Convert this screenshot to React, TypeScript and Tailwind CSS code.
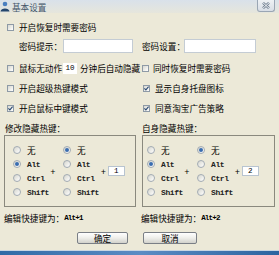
import React from 'react'

const keys = ['无', 'Alt', 'Ctrl', 'Shift']

function Check({ on }: { on?: boolean }) {
  return (
    <span className="w-[7px] h-[7px] shrink-0 border border-[#8e9aa6] bg-linear-to-br from-[#d8d8d0] to-white flex items-center justify-center">
      {on && (
        <svg width="5" height="5" viewBox="0 0 5 5">
          <path d="M0.4 2.4 L1.9 3.9 L4.6 0.7" stroke="#2b4a72" strokeWidth="1.1" fill="none" />
        </svg>
      )}
    </span>
  )
}

function Radio({ on }: { on?: boolean }) {
  return (
    <span className="w-[8px] h-[8px] shrink-0 rounded-full border border-[#a3abb3] bg-linear-to-br from-[#d6d6ce] to-white flex items-center justify-center">
      {on && <span className="w-[4px] h-[4px] rounded-full bg-[#3a6db0]" />}
    </span>
  )
}

function KeyLabel({ k }: { k: string }) {
  if (k === '无') return <span>无</span>
  return <span className="mt-[1px] font-['Liberation_Mono',monospace] text-[8px] tracking-[-0.4px] font-bold text-[#222]">{k}</span>
}

function RadioCol({ checked }: { checked: number }) {
  return (
    <div className="flex flex-col w-[36px] shrink-0">
      {keys.map((k, i) => (
        <div key={k} className="h-[14px] flex items-center gap-[6px]">
          <Radio on={i === checked} />
          <KeyLabel k={k} />
        </div>
      ))}
    </div>
  )
}

function HotkeyBox({ n, pad, w }: { n: string; pad: string; w: string }) {
  return (
    <div className={`${w} h-[72px] border border-[#8a897e] flex items-center ${pad}`}>
      <RadioCol checked={1} />
      <span className="w-[8px] text-center shrink-0">+</span>
      <div className="ml-[6px]">
        <RadioCol checked={0} />
      </div>
      <span className="w-[9px] text-center shrink-0">+</span>
      <div className="w-[17px] h-[10px] shrink-0 bg-white border border-[#b8c4d0] flex items-center pl-[5px] pt-[1px] font-['Liberation_Mono',monospace] text-[7.5px]">
        {n}
      </div>
    </div>
  )
}

export default function App() {
  return (
    <div className="w-[279px] h-[255px] bg-[#ece9d8] flex flex-col overflow-hidden text-[8.6px] leading-none text-black whitespace-nowrap font-['Noto_Sans_CJK_SC',sans-serif]">
      {/* Title bar */}
      <div className="h-[13px] shrink-0 flex items-start bg-linear-to-b from-[#d9e1ea] to-[#e6e6dc]">
        <svg width="10" height="11" viewBox="0 0 10 11" className="mt-[1px]">
          <circle cx="5" cy="3" r="2.3" fill="#4a7fbf" />
          <path d="M0.5 10.5 C0.8 6.5 9.2 6.5 9.5 10.5 Z" fill="#24466e" />
        </svg>
        <span className="ml-[2px] mt-[3px] text-[#44566a]">基本设置</span>
        <div className="ml-auto mr-[4px] w-[18px] h-[12px] rounded-b-[3px] border border-t-0 border-[#9aa6b4] bg-linear-to-b from-[#eef1f4] to-[#d8dee6] flex items-center justify-center">
          <svg width="8" height="7" viewBox="0 0 8 7">
            <path d="M1 0.8 L7 6.2 M7 0.8 L1 6.2" stroke="#6d7c8e" strokeWidth="2.4" />
            <path d="M1 0.8 L7 6.2 M7 0.8 L1 6.2" stroke="#f4f6f8" strokeWidth="1" />
          </svg>
        </div>
      </div>

      <div className="pl-[4px] grid grid-cols-[137px_133px]">
        {/* Row 1 */}
        <div className="mt-[8px] h-[12px] flex items-center gap-[5px] pl-[3px]">
          <Check />
          <span>开启恢复时需要密码</span>
        </div>
        <div />

        {/* Row 2 */}
        <div className="mt-[6px] h-[14px] flex items-center pl-[15px]">
          <span className="w-[44px] shrink-0">密码提示：</span>
          <div className="w-[70px] h-[14px] shrink-0 bg-white border border-[#c4ccd4]" />
        </div>
        <div className="mt-[6px] h-[14px] flex items-center pl-[1px]">
          <span className="w-[42px] shrink-0">密码设置：</span>
          <div className="w-[72px] h-[14px] shrink-0 bg-white border border-[#c4ccd4]" />
        </div>

        {/* Row 3 */}
        <div className="mt-[9px] h-[12px] flex items-center pl-[3px]">
          <Check />
          <span className="ml-[5px]">鼠标无动作</span>
          <div className="ml-[1px] w-[14px] h-[11px] pt-[2px] shrink-0 bg-white flex items-center justify-center font-['Liberation_Mono',monospace] text-[7.5px]">
            10
          </div>
          <span className="ml-[3px]">分钟后自动隐藏</span>
        </div>
        <div className="mt-[9px] h-[12px] flex items-center gap-[4px] pl-[1px]">
          <Check />
          <span>同时恢复时需要密码</span>
        </div>

        {/* Row 4 */}
        <div className="mt-[8px] h-[12px] flex items-center gap-[5px] pl-[3px]">
          <Check />
          <span>开启超级热键模式</span>
        </div>
        <div className="mt-[8px] h-[12px] flex items-center gap-[5px] pl-[2px]">
          <Check on />
          <span>显示自身托盘图标</span>
        </div>

        {/* Row 5 */}
        <div className="mt-[8px] h-[12px] flex items-center gap-[5px] pl-[3px]">
          <Check on />
          <span>开启鼠标中键模式</span>
        </div>
        <div className="mt-[8px] h-[12px] flex items-center gap-[5px] pl-[2px]">
          <Check on />
          <span>同意淘宝广告策略</span>
        </div>

        {/* Group labels */}
        <div className="mt-[8px] h-[12px] flex items-center pl-[1px]">修改隐藏热键：</div>
        <div className="mt-[8px] h-[12px] flex items-center pl-[1px]">自身隐藏热键：</div>

        {/* Group boxes */}
        <div className="mt-[1px]">
          <HotkeyBox n="1" pad="pl-[8px]" w="w-[132px]" />
        </div>
        <div className="mt-[1px] pl-[1px]">
          <HotkeyBox n="2" pad="pl-[4px]" w="w-[133px]" />
        </div>

        {/* Edit labels */}
        <div className="mt-[5px] h-[12px] flex items-center">
          <span>编辑快捷键为：</span>
          <span className="mt-[2px] font-['Liberation_Mono',monospace] text-[7.5px] tracking-[-0.8px] font-bold">Alt+1</span>
        </div>
        <div className="mt-[5px] h-[12px] flex items-center">
          <span>编辑快捷键为：</span>
          <span className="mt-[2px] font-['Liberation_Mono',monospace] text-[7.5px] tracking-[-0.8px] font-bold">Alt+2</span>
        </div>
      </div>

      {/* Buttons */}
      <div className="mt-[8px] pl-[77px] flex gap-[15px]">
        <button className="w-[51px] h-[12px] rounded-[2px] border border-[#7a7f86] bg-linear-to-b from-white via-[#eeeeea] to-[#d2d2cc] flex items-center justify-center">
          确定
        </button>
        <button className="w-[54px] h-[12px] rounded-[2px] border border-[#7a7f86] bg-linear-to-b from-white via-[#eeeeea] to-[#d2d2cc] flex items-center justify-center">
          取消
        </button>
      </div>

      {/* Bottom strip */}
      <div className="mt-auto h-[5px] border-t border-[#c9d6e2] bg-linear-to-r from-[#2f6aa6] via-[#5b8cc4] to-[#2c64a0]" />
    </div>
  )
}
